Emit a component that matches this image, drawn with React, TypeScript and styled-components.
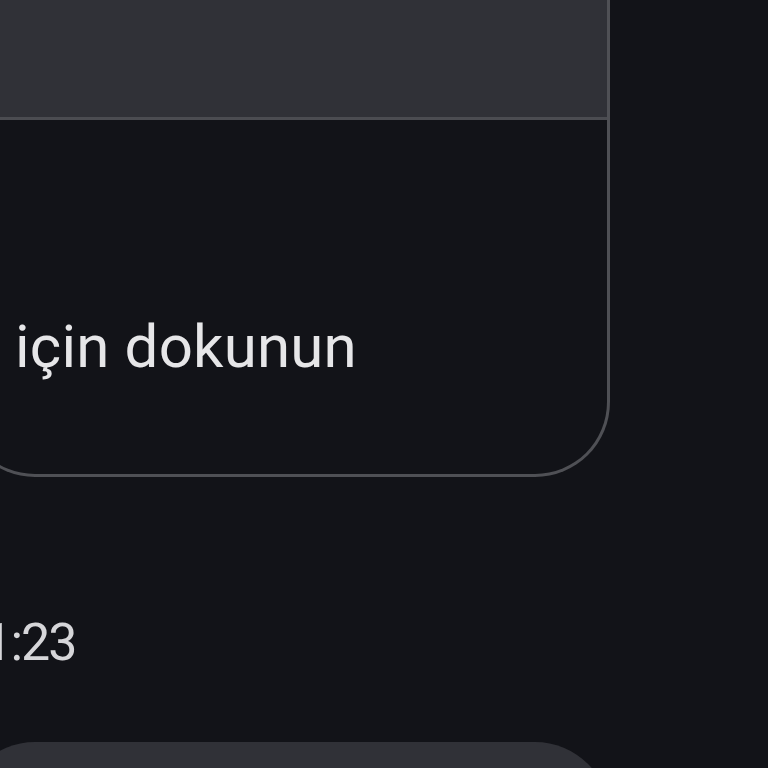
import React from "react";
import styled, { createGlobalStyle } from "styled-components";

const GlobalStyle = createGlobalStyle`
  html, body {
    margin: 0;
    padding: 0;
    background-color: #121318;
  }
  body {
    width: 768px;
    height: 768px;
    overflow: hidden;
    font-family: Roboto, "Noto Sans", sans-serif;
  }
`;

const Thread = styled.div`
  display: flex;
  flex-direction: column;
  width: 768px;
  height: 768px;
  overflow: hidden;
  background-color: #121318;
`;

const Bubble = styled.div`
  flex-shrink: 0;
  width: 650px;
  margin-left: -40px;
  box-sizing: border-box;
  border: 3px solid #4f5055;
  border-top: none;
  border-radius: 0 0 75px 75px;
  overflow: hidden;
  background-color: #121318;
`;

const Preview = styled.div`
  height: 117px;
  background-color: #303137;
  border-bottom: 3px solid #4b4c51;
`;

const Body = styled.div`
  height: 354px;
  box-sizing: border-box;
  padding: 191px 0 0 52px;
`;

const Caption = styled.div`
  font-size: 60px;
  line-height: 72px;
  color: #e6e6e8;
  letter-spacing: 0.2px;
  white-space: nowrap;
`;

const Time = styled.div`
  flex-shrink: 0;
  margin: 136px 0 0 -44px;
  font-size: 52px;
  line-height: 60px;
  letter-spacing: -2px;
  color: #d6d6d9;
  white-space: nowrap;
`;

const NextBubble = styled.div`
  flex-shrink: 0;
  width: 650px;
  height: 200px;
  margin: 69px 0 0 -40px;
  background-color: #303137;
  border-radius: 75px 75px 0 0;
`;

export default function App() {
  return (
    <>
      <GlobalStyle />
      <Thread>
        <Bubble>
          <Preview />
          <Body>
            <Caption>için dokunun</Caption>
          </Body>
        </Bubble>
        <Time>11:23</Time>
        <NextBubble />
      </Thread>
    </>
  );
}
